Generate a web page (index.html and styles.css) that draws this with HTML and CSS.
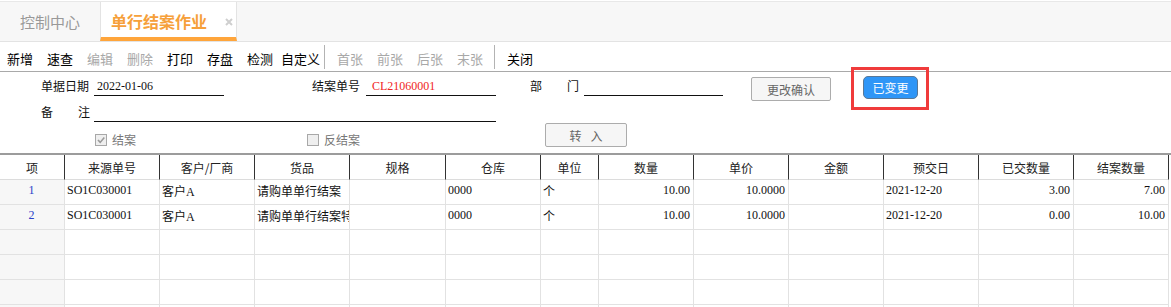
FILE: index.html
```html
<!DOCTYPE html>
<html lang="zh-CN">
<head>
<meta charset="utf-8">
<title>单行结案作业</title>
<link rel="stylesheet" href="styles.css">
</head>
<body>
<div class="tabs">
  <div class="tab tab-home">控制中心</div>
  <div class="tab tab-active">
    <span class="tab-title">单行结案作业</span>
    <svg class="tab-close" width="8" height="8" viewBox="0 0 8 8"><path d="M1 1L7 7M7 1L1 7" stroke="#cfcfcf" stroke-width="2"/></svg>
  </div>
</div>

<div class="toolbar">
  <span class="tb">新增</span>
  <span class="tb">速查</span>
  <span class="tb off">编辑</span>
  <span class="tb off">删除</span>
  <span class="tb">打印</span>
  <span class="tb">存盘</span>
  <span class="tb w34">检测</span>
  <span class="tb w43">自定义</span>
  <span class="sep"></span>
  <span class="tb off">首张</span>
  <span class="tb off">前张</span>
  <span class="tb off">后张</span>
  <span class="tb off w37">末张</span>
  <span class="sep"></span>
  <span class="tb">关闭</span>
</div>

<div class="form">
  <div class="row row1">
    <label class="lbl w53">单据日期</label>
    <div class="inp w130 pl3">2022-01-06</div>
    <label class="lbl w54 ml88">结案单号</label>
    <div class="inp w130 pl6 red">CL21060001</div>
    <label class="lbl lbl-split w49 ml34"><span>部</span><span>门</span></label>
    <div class="inp w139 ml5"></div>
    <button class="btn btn-grey ml28">更改确认</button>
    <button class="btn btn-blue ml32">已变更</button>
  </div>
  <div class="row row2">
    <label class="lbl lbl-split w49"><span>备</span><span>注</span></label>
    <div class="inp w402 ml4"></div>
  </div>
  <div class="row row3">
    <div class="chk-group g1">
      <span class="chk"><svg width="10" height="10" viewBox="0 0 10 10"><polyline points="2,5 4.2,7.4 8.3,2.6" fill="none" stroke="#9a9a9a" stroke-width="1.6"/></svg></span>
      <span class="chk-text">结案</span>
    </div>
    <div class="chk-group g2">
      <span class="chk"></span>
      <span class="chk-text">反结案</span>
    </div>
    <button class="btn btn-grey btn-in">转入</button>
  </div>
  <div class="highlight"></div>
</div>

<div class="grid">
  <div class="th">项</div><div class="th">来源单号</div><div class="th">客户/厂商</div><div class="th">货品</div><div class="th">规格</div><div class="th">仓库</div><div class="th">单位</div><div class="th">数量</div><div class="th">单价</div><div class="th">金额</div><div class="th">预交日</div><div class="th">已交数量</div><div class="th">结案数量</div>

  <div class="td idx">1</div><div class="td">SO1C030001</div><div class="td">客户A</div><div class="td">请购单单行结案</div><div class="td"></div><div class="td">0000</div><div class="td">个</div><div class="td num">10.00</div><div class="td num">10.0000</div><div class="td"></div><div class="td">2021-12-20</div><div class="td num">3.00</div><div class="td num">7.00</div>

  <div class="td idx">2</div><div class="td">SO1C030001</div><div class="td">客户A</div><div class="td">请购单单行结案特殊</div><div class="td"></div><div class="td">0000</div><div class="td">个</div><div class="td num">10.00</div><div class="td num">10.0000</div><div class="td"></div><div class="td">2021-12-20</div><div class="td num">0.00</div><div class="td num">10.00</div>

  <div class="td idx"></div><div class="td"></div><div class="td"></div><div class="td"></div><div class="td"></div><div class="td"></div><div class="td"></div><div class="td"></div><div class="td"></div><div class="td"></div><div class="td"></div><div class="td"></div><div class="td"></div>
  <div class="td idx"></div><div class="td"></div><div class="td"></div><div class="td"></div><div class="td"></div><div class="td"></div><div class="td"></div><div class="td"></div><div class="td"></div><div class="td"></div><div class="td"></div><div class="td"></div><div class="td"></div>
  <div class="td idx"></div><div class="td"></div><div class="td"></div><div class="td"></div><div class="td"></div><div class="td"></div><div class="td"></div><div class="td"></div><div class="td"></div><div class="td"></div><div class="td"></div><div class="td"></div><div class="td"></div>
  <div class="td idx"></div><div class="td"></div><div class="td"></div><div class="td"></div><div class="td"></div><div class="td"></div><div class="td"></div><div class="td"></div><div class="td"></div><div class="td"></div><div class="td"></div><div class="td"></div><div class="td"></div>
</div>
</body>
</html>
```

FILE: styles.css
```css
html, body {
  margin: 0;
  padding: 0;
  background: #fff;
  overflow: hidden;
}
body {
  width: 1171px;
  height: 307px;
  font-family: "Noto Sans CJK SC", "Liberation Sans", sans-serif;
  font-size: 12px;
  color: #111;
}

/* tabs */
.tabs {
  margin-top: 1px;
  height: 39px;
  border-top: 1px solid #e8e8e8;
  border-bottom: 1px solid #e3e3e3;
  background: #f7f7f7;
  display: flex;
}
.tab {
  height: 39px;
  box-sizing: border-box;
  display: flex;
  align-items: center;
}
.tab-home {
  width: 100px;
  padding-left: 20px;
  padding-bottom: 1px;
  font-size: 15px;
  color: #999;
  box-sizing: border-box;
}
.tab-active {
  width: 137px;
  background: #fff;
  border-left: 1px solid #e3e3e3;
  border-right: 1px solid #e3e3e3;
  border-bottom: 4px solid #ffa53b;
  padding-left: 10px;
  padding-top: 3px;
}
.tab-title {
  font-size: 16px;
  font-weight: bold;
  color: #f6a03a;
}
.tab-close {
  margin-left: auto;
  margin-right: 3px;
  margin-top: 1px;
}

/* toolbar */
.toolbar {
  height: 29px;
  border-bottom: 1px solid #a9a9a9;
  display: flex;
  align-items: center;
  padding-left: 7px;
}
.tb {
  width: 40px;
  font-size: 13px;
  color: #000;
  padding-top: 4px;
  white-space: nowrap;
}
.tb.off { color: #a8a8a8; }
.tb.w34 { width: 34px; }
.tb.w43 { width: 43px; }
.tb.w37 { width: 37px; }
.sep {
  width: 1px;
  height: 24px;
  background: #b3b3b3;
  margin-right: 12px;
}

/* form */
.form {
  position: relative;
  height: 81px;
  box-sizing: content-box;
  border-bottom: 2px solid #9c9c9c;
  padding-left: 41px;
}
.row {
  display: flex;
  align-items: flex-start;
}
.row1 { padding-top: 5px; height: 24px; }
.row2 { margin-top: 2px; height: 19px; }
.row3 { margin-top: 1px; height: 24px; }

.lbl {
  height: 18px;
  line-height: 18px;
  white-space: nowrap;
  color: #111;
}
.lbl-split {
  display: flex;
  justify-content: space-between;
}
.inp {
  height: 18px;
  line-height: 18px;
  border-bottom: 1px solid #111;
  font-family: "Liberation Serif", "Noto Sans CJK SC", serif;
  font-size: 12px;
  color: #111;
  box-sizing: content-box;
}
.red { color: #f02424; }
.pl3 { padding-left: 3px; }
.pl6 { padding-left: 6px; }
.w49 { width: 49px; }
.w53 { width: 53px; }
.w54 { width: 54px; }
.w130 { width: 130px; }
.inp.w130.pl3 { width: 127px; }
.inp.w130.pl6 { width: 124px; }
.w139 { width: 139px; }
.w402 { width: 402px; }
.ml4 { margin-left: 4px; }
.ml5 { margin-left: 5px; }
.ml28 { margin-left: 28px; }
.ml32 { margin-left: 32px; }
.ml34 { margin-left: 34px; }
.ml88 { margin-left: 88px; }

.btn {
  font-family: "Noto Sans CJK SC", sans-serif;
  font-size: 12px;
  box-sizing: border-box;
  padding: 0;
  cursor: default;
}
.btn-grey {
  width: 80px;
  height: 24px;
  background: #f6f6f6;
  border: 1px solid #acacac;
  border-radius: 2px;
  color: #666;
}
.btn-blue {
  width: 55px;
  height: 23px;
  margin-top: -1px;
  background: #2f96f7;
  border: 1px solid #5a7896;
  border-radius: 5px;
  color: #fff;
}
.btn-in {
  width: 82px;
  letter-spacing: 9px;
  padding-left: 9px;
}

.chk-group {
  display: flex;
  align-items: center;
  margin-top: 10px;
  color: #777;
}
.g1 { margin-left: 54px; width: 212px; }
.g2 { width: 238px; }
.chk {
  width: 12px;
  height: 12px;
  box-sizing: border-box;
  border: 1px solid #a8a8a8;
  background: #efefef;
  display: flex;
  align-items: center;
  justify-content: center;
  margin-right: 5px;
}
.chk svg { display: block; }
.chk-text { font-size: 12px; line-height: 14px; }

.highlight {
  position: absolute;
  left: 851px;
  top: -5px;
  width: 78px;
  height: 43px;
  box-sizing: border-box;
  border: 3px solid #f03b3b;
}

/* grid */
.grid {
  display: grid;
  grid-template-columns: 65px 95px 95px 95px 96px 95px 58px 95px 95px 95px 95px 95px 95px;
  grid-auto-rows: 25px;
  height: 152px;
  overflow: hidden;
}
.th, .td {
  box-sizing: border-box;
  overflow: hidden;
  white-space: nowrap;
  display: flex;
  align-items: center;
}
.th {
  border-right: 1px solid #333;
  border-bottom: 1px solid #dcdcdc;
  justify-content: center;
  font-size: 12px;
  color: #222;
}
.td {
  border-right: 1px solid #e2e2e2;
  border-bottom: 1px solid #e2e2e2;
  padding: 0 3px 3px 2px;
  font-family: "Liberation Serif", "Noto Sans CJK SC", serif;
  font-size: 12px;
  color: #111;
}
.td.idx {
  background: #f7f7f7;
  justify-content: center;
  color: #2a3fc9;
}
.td.num { justify-content: flex-end; }
```
